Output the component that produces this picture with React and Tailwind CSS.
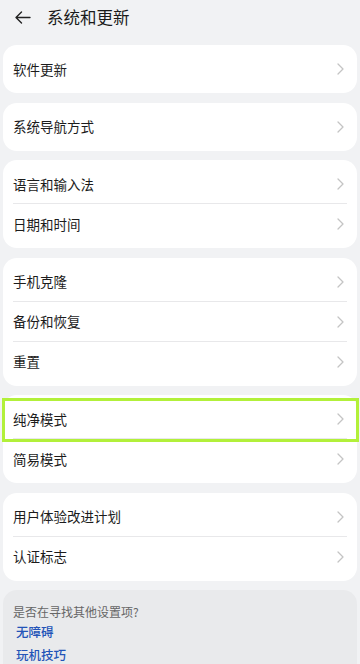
const groups = [
  ['软件更新'],
  ['系统导航方式'],
  ['语言和输入法', '日期和时间'],
  ['手机克隆', '备份和恢复', '重置'],
  ['纯净模式', '简易模式'],
  ['用户体验改进计划', '认证标志'],
]

function Chevron() {
  return (
    <svg width="7" height="12" viewBox="0 0 7 12" fill="none" className="shrink-0">
      <path d="M1 1l5 5-5 5" stroke="#c4c4c4" strokeWidth="1.3" strokeLinecap="round" strokeLinejoin="round" />
    </svg>
  )
}

function Row({ label, last, highlight }) {
  return (
    <div className="relative">
      <div className="h-10 flex items-center justify-between pl-[10px] pr-[13px]">
        <span className="text-[13.5px] text-[#1c1c1c]">{label}</span>
        <Chevron />
      </div>
      {!last && <div className="h-px bg-[#e8e8ea] ml-[10px] mr-[10px] -mt-px" />}
      {highlight && (
        <div className="absolute left-[-1px] right-[-2px] top-[-1px] bottom-[-3px] border-[3px] border-[#b2f03a]" />
      )}
    </div>
  )
}

export default function App() {
  return (
    <div className="w-[360px] h-[664px] overflow-hidden bg-[#f1f2f4] font-['Noto_Sans_CJK_SC','Noto_Sans',sans-serif]">
      <div className="h-[34px] flex items-center">
        <svg width="16" height="13" viewBox="0 0 16 13" fill="none" className="ml-[15px]">
          <path d="M15 6.5H1.5M6.5 1L1 6.5 6.5 12" stroke="#222" strokeWidth="1.4" strokeLinecap="round" strokeLinejoin="round" />
        </svg>
        <span className="ml-[16px] text-[16.5px] text-[#1a1a1a]">系统和更新</span>
      </div>
      <div className="px-[3px] pt-[11px] flex flex-col gap-[9.5px]">
        {groups.map((g, gi) => (
          <div key={gi} className="bg-white rounded-[14px] py-[4px]">
            {g.map((label, i) => (
              <Row key={label} label={label} last={i === g.length - 1} highlight={label === '纯净模式'} />
            ))}
          </div>
        ))}
        <div className="bg-[#e9eaec] rounded-[14px] pt-[13px] pl-[10px] h-[90px]">
          <div className="text-[12px] text-[#666] leading-[17px]">是否在寻找其他设置项?</div>
          <div className="text-[12.5px] text-[#2354b8] font-medium leading-[17px] mt-[3px] ml-[3px]">无障碍</div>
          <div className="text-[12.5px] text-[#2354b8] font-medium leading-[17px] mt-[6px] ml-[3px]">玩机技巧</div>
        </div>
      </div>
    </div>
  )
}
